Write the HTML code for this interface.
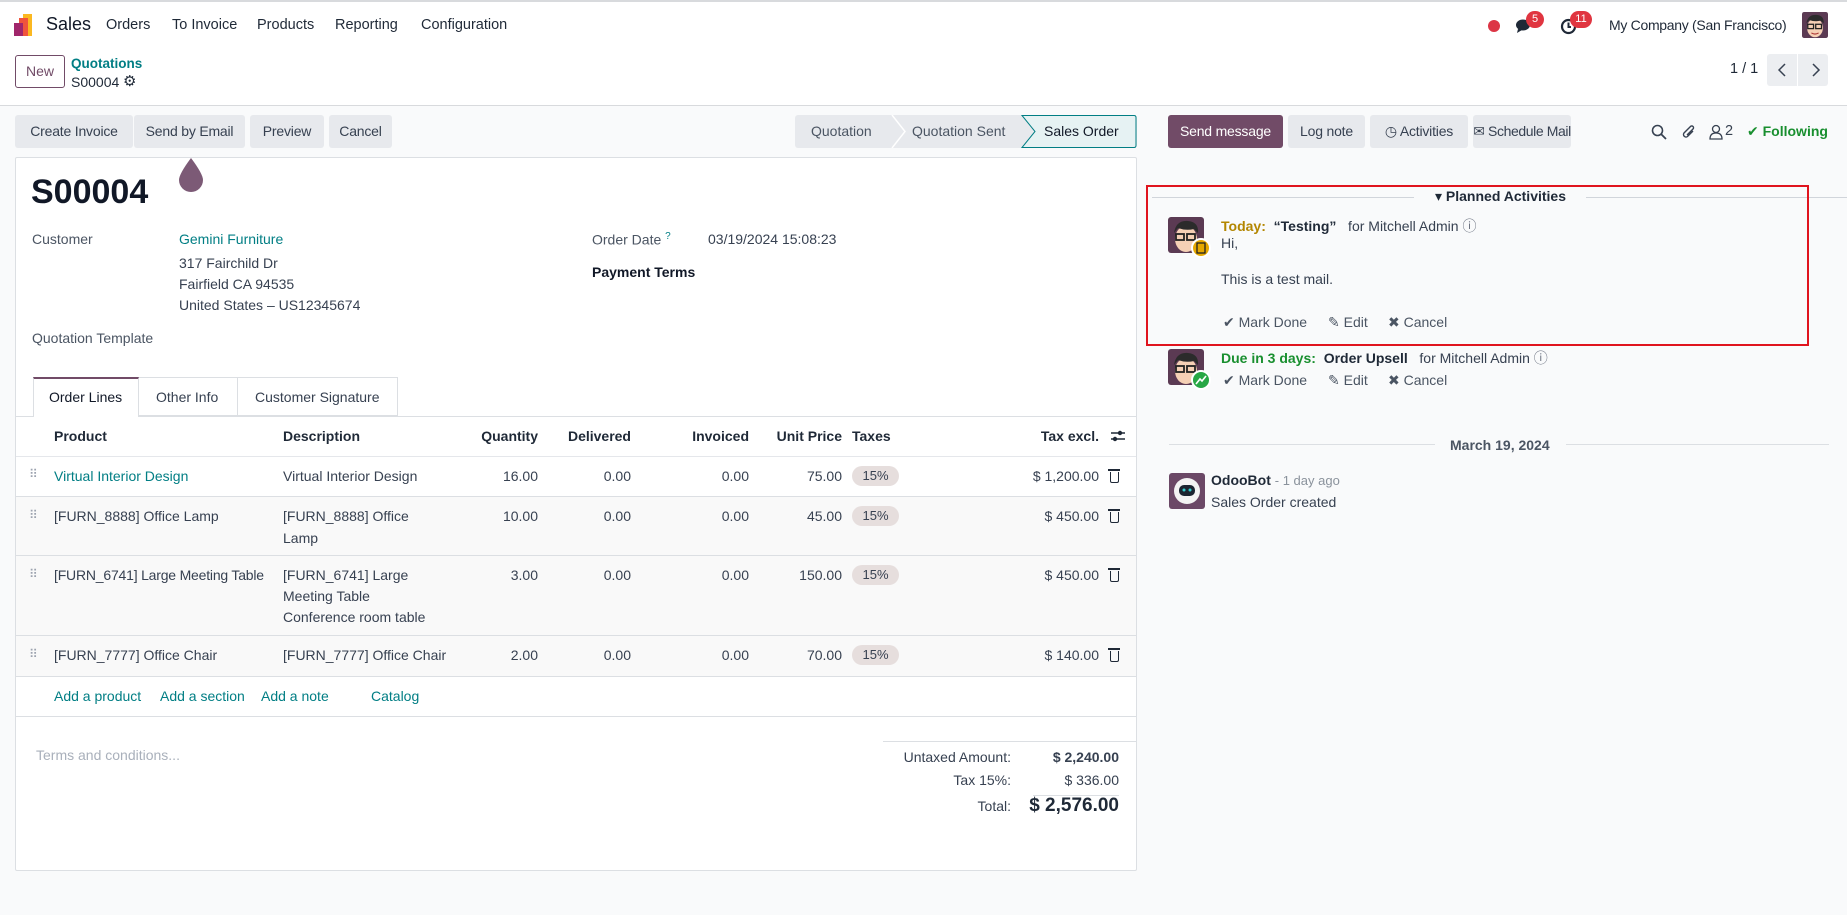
<!DOCTYPE html>
<html><head><meta charset="utf-8">
<style>
*{box-sizing:border-box;margin:0;padding:0}
body{width:1847px;height:915px;overflow:hidden;font-family:"Liberation Sans","DejaVu Sans",sans-serif;font-size:14px;color:#374151;background:#f9fafb;position:relative}
.a{position:absolute;white-space:nowrap}
.top{position:absolute;left:0;top:0;width:1847px;height:106px;background:#fff;border-top:2px solid #d8dadd;border-bottom:1px solid #d8dadd}
.nav{font-size:14.5px;color:#1f2937}
.btn{position:absolute;top:115px;height:33px;background:#e7e9ed;border-radius:3px;color:#374151;font-size:14px;line-height:33px;text-align:center;white-space:nowrap;letter-spacing:-0.2px}
.sheet{position:absolute;left:15px;top:157px;width:1122px;height:714px;background:#fff;border:1px solid #dcdfe3;border-radius:2px}
.link{color:#017e84}
.th{font-weight:bold;color:#1f2937}
.r{text-align:right}
.pill{position:absolute;width:47px;height:20px;border-radius:10px;background:#e6dedd;font-size:13px;line-height:20px;text-align:center}
.hl{position:absolute;height:1px;background:#dcdfe3}
.trash{position:absolute;width:9px;height:11px;border:1.5px solid #1f2937;border-top:none;border-radius:0 0 2px 2px}
.trash:before{content:"";position:absolute;left:-3px;top:-3px;width:12px;height:2px;background:#1f2937}
.act{color:#4b5563}
</style></head><body>
<div class="top"></div>
<svg class="a" style="left:14px;top:14px" width="22" height="22" viewBox="0 0 22 22"><rect x="9" y="0" width="9" height="22" fill="#fbb821"/><rect x="5" y="4" width="9" height="18" fill="#f0543c"/><rect x="0" y="9" width="9" height="13" fill="#a0266b"/></svg>
<div class="a" style="left:46px;top:14px;font-size:18px;color:#111827">Sales</div>
<div class="a nav" style="left:106px;top:17px">Orders</div>
<div class="a nav" style="left:172px;top:17px">To Invoice</div>
<div class="a nav" style="left:257px;top:17px">Products</div>
<div class="a nav" style="left:335px;top:17px">Reporting</div>
<div class="a nav" style="left:421px;top:17px">Configuration</div>
<div class="a" style="left:1488px;top:20px;width:12px;height:12px;border-radius:6px;background:#dc3545"></div>
<svg class="a" style="left:1515px;top:18px" width="18" height="16" viewBox="0 0 18 16"><ellipse cx="8" cy="7" rx="7" ry="5.5" fill="#1f2937"/><path d="M3 11 L2 15 L7 12Z" fill="#1f2937"/></svg>
<div class="a" style="left:1526px;top:11px;width:18px;height:17px;border-radius:9px;background:#e03540;color:#fff;font-size:11px;text-align:center;line-height:17px">5</div>
<svg class="a" style="left:1560px;top:18px" width="17" height="17" viewBox="0 0 17 17"><circle cx="8.5" cy="8.5" r="6.5" fill="none" stroke="#1f2937" stroke-width="2.2"/><path d="M8.5 4.5V9H11" stroke="#1f2937" stroke-width="2" fill="none"/></svg>
<div class="a" style="left:1570px;top:11px;width:22px;height:17px;border-radius:9px;background:#e03540;color:#fff;font-size:11px;text-align:center;line-height:17px">11</div>
<div class="a nav" style="left:1609px;top:17px;font-size:14px;letter-spacing:-0.3px">My Company (San Francisco)</div>
<svg class="a" style="left:1802px;top:12px" width="26" height="26" viewBox="0 0 36 36"><rect width="36" height="36" rx="3" fill="#5b3a53"/><ellipse cx="18" cy="22" rx="11" ry="13" fill="#f5d0b5"/><path d="M6 16 Q8 3 20 4 Q31 5 30 16 L26 12 Q18 14 10 11Z" fill="#2b2b2b"/><rect x="8" y="17" width="8" height="6" fill="none" stroke="#222" stroke-width="1.8"/><rect x="19" y="17" width="8" height="6" fill="none" stroke="#222" stroke-width="1.8"/><path d="M13 29 Q18 32 23 29" stroke="#a33" stroke-width="1.5" fill="none"/></svg>

<div class="a" style="left:15px;top:55px;width:50px;height:33px;border:1px solid #714b67;border-radius:3px;color:#714b67;text-align:center;line-height:31px;font-size:14px">New</div>
<div class="a link" style="left:71px;top:56px;font-weight:bold;font-size:13.5px">Quotations</div>
<div class="a" style="left:71px;top:74px;font-size:14px;color:#1f2937">S00004</div>
<div class="a" style="left:123px;top:72px;font-size:15px;color:#1f2937">⚙</div>
<div class="a" style="left:1730px;top:61px;font-size:14.5px;color:#1f2937">1 / 1</div>
<div class="a" style="left:1767px;top:54px;width:61px;height:32px;background:#eceef1;border-radius:3px"></div>
<div class="a" style="left:1797px;top:54px;width:1px;height:32px;background:#fff"></div>
<svg class="a" style="left:1775px;top:62px" width="48" height="16" viewBox="0 0 48 16"><path d="M10 2 L4 8 L10 14" stroke="#374151" stroke-width="1.5" fill="none"/><path d="M38 2 L44 8 L38 14" stroke="#374151" stroke-width="1.5" fill="none"/></svg>

<div class="btn" style="left:15px;width:118px">Create Invoice</div>
<div class="btn" style="left:134px;width:111px">Send by Email</div>
<div class="btn" style="left:250px;width:74px">Preview</div>
<div class="btn" style="left:329px;width:63px">Cancel</div>
<div class="a" style="left:795px;top:115px;width:342px;height:33px;background:#e7e9ed;border-radius:3px"></div>
<svg class="a" style="left:795px;top:115px" width="342" height="33" viewBox="0 0 342 33"><path d="M97 0 L110 16.5 L97 33" stroke="#fff" stroke-width="1.5" fill="none"/><path d="M227 0.5 L339 0.5 Q341 0.5 341 2.5 L341 30.5 Q341 32.5 339 32.5 L227 32.5 L240 16.5Z" fill="#e6f2f3" stroke="#017e84" stroke-width="1"/></svg>
<div class="a" style="left:811px;top:123px;color:#4b5563">Quotation</div>
<div class="a" style="left:912px;top:123px;color:#4b5563">Quotation Sent</div>
<div class="a" style="left:1044px;top:123px;color:#111827">Sales Order</div>

<div class="sheet"></div>
<svg class="a" style="left:176px;top:158px" width="30" height="34" viewBox="0 0 30 34"><path d="M15 0 Q3 16 3 22 A12 12 0 0 0 27 22 Q27 16 15 0Z" fill="#7c5a76"/></svg>
<div class="a" style="left:31px;top:173px;font-size:34px;font-weight:bold;color:#111827">S00004</div>
<div class="a" style="left:32px;top:231px;color:#4b5563">Customer</div>
<div class="a link" style="left:179px;top:231px">Gemini Furniture</div>
<div class="a" style="left:179px;top:255px">317 Fairchild Dr</div>
<div class="a" style="left:179px;top:276px">Fairfield CA 94535</div>
<div class="a" style="left:179px;top:297px">United States – US12345674</div>
<div class="a" style="left:32px;top:330px;color:#4b5563">Quotation Template</div>
<div class="a" style="left:592px;top:231px;color:#4b5563">Order Date <sup class="link" style="font-size:10px">?</sup></div>
<div class="a" style="left:708px;top:231px">03/19/2024 15:08:23</div>
<div class="a" style="left:592px;top:264px;font-weight:bold;color:#111827">Payment Terms</div>

<div class="hl" style="left:16px;top:416px;width:1120px"></div>
<div class="a" style="left:33px;top:377px;width:106px;height:40px;background:#fff;border:1px solid #dcdfe3;border-top:2px solid #714b67;border-bottom:none"></div>
<div class="a" style="left:139px;top:377px;width:99px;height:39px;border:1px solid #dcdfe3;border-left:none"></div>
<div class="a" style="left:238px;top:377px;width:160px;height:39px;border:1px solid #dcdfe3;border-left:none"></div>
<div class="a" style="left:49px;top:389px;color:#111827">Order Lines</div>
<div class="a" style="left:156px;top:389px">Other Info</div>
<div class="a" style="left:255px;top:389px">Customer Signature</div>

<div class="a" style="left:16px;top:496px;width:1120px;height:180px;background:#f9f9f9"></div>
<div class="a th" style="left:54px;top:428px">Product</div>
<div class="a th" style="left:283px;top:428px">Description</div>
<div class="a th r" style="left:438px;width:100px;top:428px">Quantity</div>
<div class="a th r" style="left:531px;width:100px;top:428px">Delivered</div>
<div class="a th r" style="left:649px;width:100px;top:428px">Invoiced</div>
<div class="a th r" style="left:742px;width:100px;top:428px">Unit Price</div>
<div class="a th" style="left:852px;top:428px">Taxes</div>
<div class="a th r" style="left:999px;width:100px;top:428px">Tax excl.</div>
<svg class="a" style="left:1110px;top:429px" width="16" height="14" viewBox="0 0 16 14"><path d="M1 4H15M1 10H15" stroke="#1f2937" stroke-width="1.6"/><circle cx="10" cy="4" r="2.2" fill="#1f2937"/><circle cx="5" cy="10" r="2.2" fill="#1f2937"/></svg>
<div class="hl" style="left:16px;top:456px;width:1120px;background:#e5e7eb"></div>

<div class="a" style="left:29px;top:467px;color:#9ca3af;font-size:12px">⠿</div>
<div class="a link" style="left:54px;top:468px">Virtual Interior Design</div>
<div class="a" style="left:283px;top:468px">Virtual Interior Design</div>
<div class="a r" style="left:438px;width:100px;top:468px">16.00</div>
<div class="a r" style="left:531px;width:100px;top:468px">0.00</div>
<div class="a r" style="left:649px;width:100px;top:468px">0.00</div>
<div class="a r" style="left:742px;width:100px;top:468px">75.00</div>
<div class="pill" style="left:852px;top:466px">15%</div>
<div class="a r" style="left:979px;width:120px;top:468px">$ 1,200.00</div>
<div class="trash" style="left:1110px;top:472px"></div>
<div class="hl" style="left:16px;top:496px;width:1120px"></div>
<div class="a" style="left:29px;top:508px;color:#9ca3af;font-size:12px">⠿</div>
<div class="a" style="left:54px;top:508px">[FURN_8888] Office Lamp</div>
<div class="a" style="left:283px;top:508px">[FURN_8888] Office</div>
<div class="a" style="left:283px;top:530px">Lamp</div>
<div class="a r" style="left:438px;width:100px;top:508px">10.00</div>
<div class="a r" style="left:531px;width:100px;top:508px">0.00</div>
<div class="a r" style="left:649px;width:100px;top:508px">0.00</div>
<div class="a r" style="left:742px;width:100px;top:508px">45.00</div>
<div class="pill" style="left:852px;top:506px">15%</div>
<div class="a r" style="left:979px;width:120px;top:508px">$ 450.00</div>
<div class="trash" style="left:1110px;top:512px"></div>
<div class="hl" style="left:16px;top:555px;width:1120px"></div>
<div class="a" style="left:29px;top:567px;color:#9ca3af;font-size:12px">⠿</div>
<div class="a" style="left:54px;top:567px;letter-spacing:-0.2px">[FURN_6741] Large Meeting Table</div>
<div class="a" style="left:283px;top:567px">[FURN_6741] Large</div>
<div class="a" style="left:283px;top:588px">Meeting Table</div>
<div class="a" style="left:283px;top:609px">Conference room table</div>
<div class="a r" style="left:438px;width:100px;top:567px">3.00</div>
<div class="a r" style="left:531px;width:100px;top:567px">0.00</div>
<div class="a r" style="left:649px;width:100px;top:567px">0.00</div>
<div class="a r" style="left:742px;width:100px;top:567px">150.00</div>
<div class="pill" style="left:852px;top:565px">15%</div>
<div class="a r" style="left:979px;width:120px;top:567px">$ 450.00</div>
<div class="trash" style="left:1110px;top:571px"></div>
<div class="hl" style="left:16px;top:635px;width:1120px"></div>
<div class="a" style="left:29px;top:647px;color:#9ca3af;font-size:12px">⠿</div>
<div class="a" style="left:54px;top:647px">[FURN_7777] Office Chair</div>
<div class="a" style="left:283px;top:647px">[FURN_7777] Office Chair</div>
<div class="a r" style="left:438px;width:100px;top:647px">2.00</div>
<div class="a r" style="left:531px;width:100px;top:647px">0.00</div>
<div class="a r" style="left:649px;width:100px;top:647px">0.00</div>
<div class="a r" style="left:742px;width:100px;top:647px">70.00</div>
<div class="pill" style="left:852px;top:645px">15%</div>
<div class="a r" style="left:979px;width:120px;top:647px">$ 140.00</div>
<div class="trash" style="left:1110px;top:651px"></div>
<div class="hl" style="left:16px;top:676px;width:1120px"></div>
<div class="a link" style="left:54px;top:688px">Add a product</div>
<div class="a link" style="left:160px;top:688px">Add a section</div>
<div class="a link" style="left:261px;top:688px">Add a note</div>
<div class="a link" style="left:371px;top:688px">Catalog</div>
<div class="hl" style="left:16px;top:716px;width:1120px"></div>

<div class="a" style="left:36px;top:747px;color:#a9b0bb">Terms and conditions...</div>
<div class="hl" style="left:883px;top:741px;width:254px"></div>
<div class="a r" style="left:861px;width:150px;top:749px">Untaxed Amount:</div>
<div class="a r" style="left:1019px;width:100px;top:749px;font-weight:bold">$ 2,240.00</div>
<div class="a r" style="left:861px;width:150px;top:772px">Tax 15%:</div>
<div class="a r" style="left:1019px;width:100px;top:772px">$ 336.00</div>
<div class="hl" style="left:1033px;top:795px;width:86px"></div>
<div class="a r" style="left:861px;width:150px;top:798px">Total:</div>
<div class="a r" style="left:999px;width:120px;top:795px;font-weight:bold;font-size:19px;color:#1f2937">$ 2,576.00</div>

<div class="btn" style="left:1168px;width:115px;background:#714b67;color:#fff">Send message</div>
<div class="btn" style="left:1288px;width:77px">Log note</div>
<div class="btn" style="left:1370px;width:98px">◷ Activities</div>
<div class="btn" style="left:1473px;width:98px;letter-spacing:-0.4px">✉ Schedule Mail</div>
<svg class="a" style="left:1651px;top:124px" width="16" height="16" viewBox="0 0 16 16"><circle cx="6.5" cy="6.5" r="5" fill="none" stroke="#374151" stroke-width="1.6"/><path d="M10 10L15 15" stroke="#374151" stroke-width="1.8"/></svg>
<svg class="a" style="left:1681px;top:123px" width="16" height="18" viewBox="0 0 16 18"><path d="M12 8 L6.5 13.5 A2.5 2.5 0 0 1 3 10 L9.5 3.5 A1.7 1.7 0 0 1 12 6 L6 12" stroke="#374151" stroke-width="1.4" fill="none"/></svg>
<svg class="a" style="left:1709px;top:124px" width="14" height="16" viewBox="0 0 14 16"><circle cx="7" cy="5" r="3.5" fill="none" stroke="#374151" stroke-width="1.3"/><path d="M1 15 Q1 9 7 9 Q13 9 13 15Z" fill="none" stroke="#374151" stroke-width="1.3"/></svg>
<div class="a" style="left:1725px;top:123px;font-size:14.5px">2</div>
<div class="a" style="left:1747px;top:123px;color:#198f2f;font-weight:bold">✔ Following</div>

<div class="hl" style="left:1152px;top:197px;width:262px;background:#d1d5db"></div>
<div class="hl" style="left:1586px;top:197px;width:261px;background:#d1d5db"></div>
<div class="a" style="left:1435px;top:188px;font-weight:bold;color:#1f2937">▾ Planned Activities</div>
<div class="a" style="left:1146px;top:185px;width:663px;height:161px;border:2px solid #e0141e"></div>

<svg class="a" style="left:1168px;top:217px" width="45" height="42" viewBox="0 0 45 42"><rect width="36" height="36" rx="3" fill="#5b3a53"/><ellipse cx="18" cy="22" rx="11" ry="13" fill="#f5d0b5"/><path d="M6 16 Q8 3 20 4 Q31 5 30 16 L26 12 Q18 14 10 11Z" fill="#2b2b2b"/><rect x="8" y="17" width="8" height="6" fill="none" stroke="#222" stroke-width="1.8"/><rect x="19" y="17" width="8" height="6" fill="none" stroke="#222" stroke-width="1.8"/><circle cx="33" cy="31" r="9" fill="#e6a800" stroke="#fff" stroke-width="2"/><rect x="29" y="26" width="8" height="10" fill="none" stroke="#222" stroke-width="1.3"/></svg>
<div class="a" style="left:1221px;top:216px"><b style="color:#b38600">Today:</b>&nbsp; <b style="color:#1f2937">“Testing”</b>&nbsp;&nbsp; for Mitchell Admin <span style="color:#6b7280">ⓘ</span></div>
<div class="a" style="left:1221px;top:235px">Hi,</div>
<div class="a" style="left:1221px;top:271px">This is a test mail.</div>
<div class="a act" style="left:1223px;top:314px">✔ Mark Done</div>
<div class="a act" style="left:1328px;top:314px">✎ Edit</div>
<div class="a act" style="left:1388px;top:314px">✖ Cancel</div>

<svg class="a" style="left:1168px;top:349px" width="45" height="42" viewBox="0 0 45 42"><rect width="36" height="36" rx="3" fill="#5b3a53"/><ellipse cx="18" cy="22" rx="11" ry="13" fill="#f5d0b5"/><path d="M6 16 Q8 3 20 4 Q31 5 30 16 L26 12 Q18 14 10 11Z" fill="#2b2b2b"/><rect x="8" y="17" width="8" height="6" fill="none" stroke="#222" stroke-width="1.8"/><rect x="19" y="17" width="8" height="6" fill="none" stroke="#222" stroke-width="1.8"/><circle cx="33" cy="31" r="9" fill="#28a745" stroke="#fff" stroke-width="2"/><path d="M28 35 L32 30 L34 32 L38 27" stroke="#fff" stroke-width="1.6" fill="none"/></svg>
<div class="a" style="left:1221px;top:348px"><b style="color:#198f2f">Due in 3 days:</b>&nbsp; <b style="color:#1f2937">Order Upsell</b>&nbsp;&nbsp; for Mitchell Admin <span style="color:#6b7280">ⓘ</span></div>
<div class="a act" style="left:1223px;top:372px">✔ Mark Done</div>
<div class="a act" style="left:1328px;top:372px">✎ Edit</div>
<div class="a act" style="left:1388px;top:372px">✖ Cancel</div>

<div class="hl" style="left:1169px;top:444px;width:266px"></div>
<div class="hl" style="left:1566px;top:444px;width:263px"></div>
<div class="a" style="left:1450px;top:437px;font-weight:bold;color:#4b5563">March 19, 2024</div>
<svg class="a" style="left:1169px;top:473px" width="36" height="36" viewBox="0 0 36 36"><rect width="36" height="36" rx="3" fill="#6b4866"/><circle cx="18" cy="18" r="13" fill="#f3f3f3"/><rect x="10" y="12" width="16" height="11" rx="5" fill="#1b2430"/><circle cx="15" cy="17" r="1.5" fill="#3cc"/><circle cx="21" cy="17" r="1.5" fill="#3cc"/></svg>
<div class="a" style="left:1211px;top:472px"><b style="color:#1f2937">OdooBot</b> <span style="color:#8a929c;font-size:13px">- 1 day ago</span></div>
<div class="a" style="left:1211px;top:494px">Sales Order created</div>
</body></html>
